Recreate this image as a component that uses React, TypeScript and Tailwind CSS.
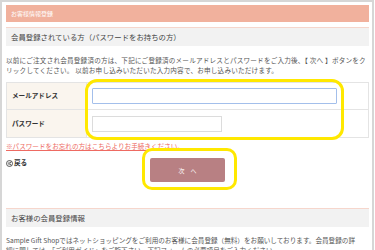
import React from "react";

const jp = { fontFamily: '"Noto Sans CJK JP", "Noto Sans", sans-serif' };

function BackIcon() {
  return (
    <svg width="7" height="7" viewBox="0 0 14 14" fill="none" stroke="#333" strokeWidth="1.6">
      <circle cx="7" cy="7" r="6" />
      <path d="M7 4 L4.5 7 L7 10 M10 4 L7.5 7 L10 10" strokeLinecap="round" strokeLinejoin="round" />
    </svg>
  );
}

export default function App() {
  return (
    <div className="relative h-[250px] w-[375px] overflow-hidden bg-white" style={jp}>
      <div className="h-[270px] w-[374px] border-2 border-b-0 border-[#d6d6d6] pl-[4px] pr-[3px] pt-[3px]">
        {/* タイトル */}
        <div className="flex h-[17px] items-center bg-[#f1b19d] pl-[5px] text-[6px] text-white">
          お客様情報登録
        </div>

        <div className="mt-[5px] flex h-[19px] items-center border-t border-[#f6d6cc] bg-[#f2f2f2] pl-[5px] text-[7.4px] text-[#444]">
          会員登録されている方（パスワードをお持ちの方）
        </div>

        <p className="mt-[9px] whitespace-nowrap text-[6.6px] leading-[10px] tracking-[0.2px] text-[#555]">
          以前にご注文され会員登録済の方は、下記にご登録済のメールアドレスとパスワードをご入力後、【 次へ 】ボタンをク
          <br />
          リックしてください。 以前お申し込みいただいた入力内容で、お申し込みいただけます。
        </p>

        {/* ログインフォーム */}
        <div className="mt-[7px] grid grid-cols-[80px_1fr] border border-[#e4e4e4]">
          <div className="flex h-[27px] items-center border-b border-r border-[#e4e4e4] bg-[#faf5ee] pl-[5px] text-[6.6px] font-bold text-[#333]">
            メールアドレス
          </div>
          <div className="flex h-[27px] items-center border-b border-[#e4e4e4] pl-[5px]">
            <input className="h-[16px] w-[245px] rounded-[1px] border border-[#a3bfeb] bg-white outline-none" />
          </div>
          <div className="flex h-[27px] items-center border-r border-[#e4e4e4] bg-[#faf5ee] pl-[5px] text-[6.6px] font-bold text-[#333]">
            パスワード
          </div>
          <div className="flex h-[27px] items-center pl-[5px]">
            <input type="password" className="h-[16px] w-[130px] border border-[#dcdcdc] bg-white outline-none" />
          </div>
        </div>

        <a className="mt-[3px] block text-[6.6px] leading-[10px] text-[#ee6a62] underline">
          ※パスワードをお忘れの方はこちらよりお手続きください。
        </a>

        <div className="mt-[7px] grid grid-cols-[1fr_auto_1fr] items-start">
          <div className="flex h-[10px] items-center gap-[1px] text-[6.6px] font-bold text-[#333]">
            <BackIcon />
            戻る
          </div>
          <button className="flex h-[24px] w-[75px] items-center justify-center rounded-[2px] bg-[#b88083] text-[6px] text-white">
            次　へ
          </button>
          <div />
        </div>

        <div className="mt-[26px] flex h-[19px] items-center border-t border-[#f6d6cc] bg-[#f2f2f2] pl-[5px] text-[7.4px] text-[#444]">
          お客様の会員登録情報
        </div>

        <p className="mt-[8px] whitespace-nowrap text-[6.6px] leading-[10px] text-[#555]">
          Sample Gift Shopではネットショッピングをご利用のお客様に会員登録（無料）をお願いしております。会員登録の詳
          <br />
          細に関しては、「ご利用ガイド」をご覧下さい。下記フォームの必要項目をご入力ください。
        </p>
      </div>

      {/* 注釈の黄色い枠 */}
      <div className="pointer-events-none absolute left-[85px] top-[79px] h-[61px] w-[259px] rounded-[12px] border-[3px] border-[#ffe800]" />
      <div className="pointer-events-none absolute left-[142px] top-[148px] h-[42px] w-[95px] rounded-[10px] border-[3px] border-[#ffe800]" />
    </div>
  );
}
